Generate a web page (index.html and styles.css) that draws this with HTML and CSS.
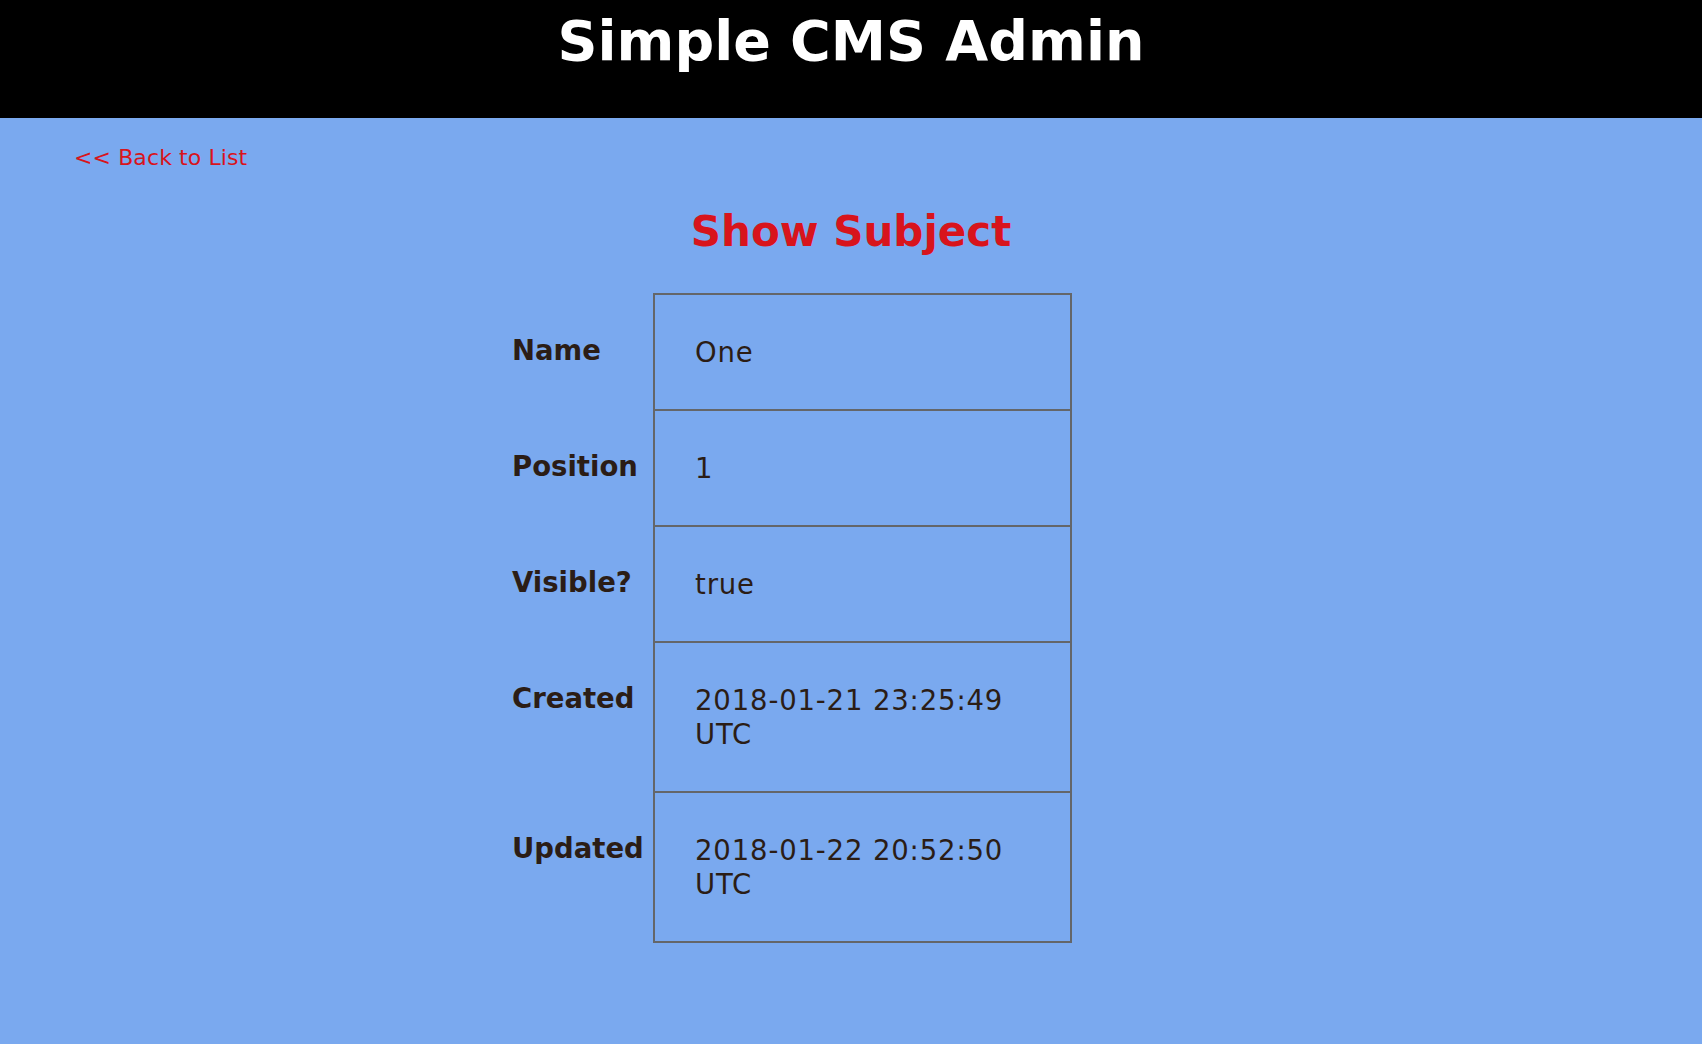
FILE: index.html
```html
<!DOCTYPE html>
<html lang="en">
<head>
<meta charset="utf-8">
<title>Simple CMS Admin</title>
<link rel="stylesheet" href="styles.css">
</head>
<body>
<header class="site-header">
  <h1 class="site-title">Simple CMS Admin</h1>
</header>
<main class="content">
  <a class="back-link" href="#">&lt;&lt; Back to List</a>
  <h2 class="page-title">Show Subject</h2>
  <table class="attributes">
    <tr><th>Name</th><td>One</td></tr>
    <tr><th>Position</th><td>1</td></tr>
    <tr><th>Visible?</th><td>true</td></tr>
    <tr><th>Created</th><td>2018-01-21 23:25:49 UTC</td></tr>
    <tr><th>Updated</th><td>2018-01-22 20:52:50 UTC</td></tr>
  </table>
</main>
</body>
</html>
```
FILE: styles.css
```css
html, body {
  margin: 0;
  padding: 0;
}
body {
  background: #7aa9ef;
  color: #2b1d16;
  font-family: "DejaVu Sans", Verdana, sans-serif;
  min-height: 1044px;
}
.site-header {
  background: #000;
  height: 118px;
  box-sizing: border-box;
  padding-top: 8px;
}
.site-title {
  margin: 0;
  color: #fff;
  font-size: 55.5px;
  font-weight: bold;
  text-align: center;
  line-height: 65px;
}
.content {
  padding: 27px 0 0 0;
}
.back-link {
  display: inline-block;
  margin-left: 74px;
  color: #d8141c;
  font-size: 22px;
  line-height: 26px;
  letter-spacing: 0.1px;
  text-decoration: none;
}
.page-title {
  margin: 36px 0 0 0;
  color: #d8141c;
  font-size: 42px;
  font-weight: bold;
  text-align: center;
  line-height: 49px;
}
.attributes {
  margin: 37px 0 0 512px;
  border-collapse: collapse;
  font-size: 27.5px;
  line-height: 34px;
}
.attributes th {
  width: 142px;
  box-sizing: border-box;
  padding: 39px 0 40px 0;
  text-align: left;
  vertical-align: top;
  font-weight: bold;
}
.attributes td {
  width: 335px;
  padding: 40px 40px 40px 40px;
  border: 2px solid #646669;
  vertical-align: top;
  letter-spacing: 0.85px;
}
```
